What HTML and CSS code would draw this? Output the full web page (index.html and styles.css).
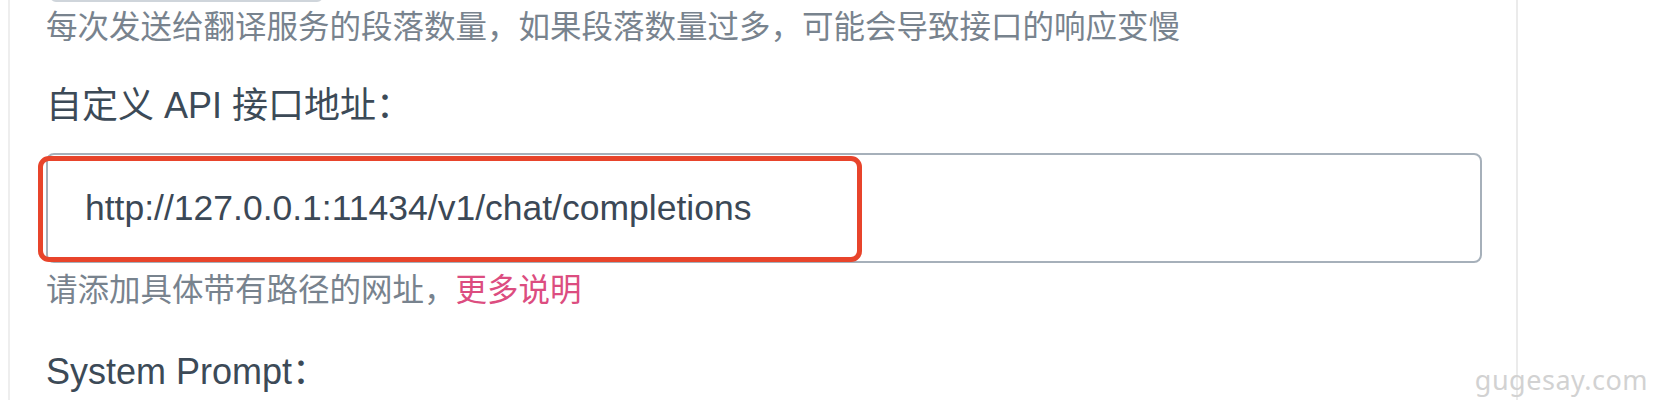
FILE: index.html
```html
<!DOCTYPE html>
<html lang="zh-CN">
<head>
<meta charset="utf-8">
<title>设置</title>
<link rel="stylesheet" href="styles.css">
</head>
<body>
<div class="page">
  <div class="panel">
    <div class="prev-input"></div>
    <p class="hint hint-first">每次发送给翻译服务的段落数量，如果段落数量过多，可能会导致接口的响应变慢</p>
    <label class="label label-api">自定义 API 接口地址：</label>
    <div class="field">
      <input class="text-input" type="text" value="http://127.0.0.1:11434/v1/chat/completions">
      <div class="highlight"></div>
    </div>
    <p class="hint hint-second">请添加具体带有路径的网址，<a class="link" href="#">更多说明</a></p>
    <label class="label label-prompt">System Prompt：</label>
  </div>
  <div class="watermark">gugesay.com</div>
</div>
</body>
</html>
```

FILE: styles.css
```css
html, body {
  margin: 0;
  padding: 0;
  background: #ffffff;
  height: 400px;
  overflow: hidden;
}

.page {
  position: relative;
  height: 400px;
  font-family: "Liberation Sans", "Noto Sans CJK SC", sans-serif;
}

.panel {
  margin-left: 8px;
  width: 1510px;
  height: 400px;
  box-sizing: border-box;
  border-left: 2px solid #eeeeee;
  border-right: 2px solid #ebebeb;
  padding-left: 36px;
  display: flex;
  flex-direction: column;
  align-items: flex-start;
}

.prev-input {
  width: 273px;
  height: 60px;
  margin-top: -58px;
  margin-left: 4px;
  box-sizing: border-box;
  border: 2px solid #cfd5db;
  border-radius: 6px;
}

.hint {
  margin: 0;
  font-size: 31.5px;
  line-height: 44px;
  color: #78838e;
}

.hint-first {
  margin-top: 3px;
}

.label {
  display: block;
  font-size: 36px;
  line-height: 44px;
  color: #3c4a57;
}

.label-api {
  margin-top: 35px;
}

.field {
  position: relative;
  margin-top: 25px;
  width: 1436px;
}

.text-input {
  display: block;
  width: 100%;
  height: 110px;
  box-sizing: border-box;
  border: 2px solid #a6b0ba;
  border-radius: 8px;
  padding: 0 0 0 37px;
  font-family: "Liberation Sans", "Noto Sans CJK SC", sans-serif;
  font-size: 35.5px;
  color: #3b4856;
  background: #ffffff;
  outline: none;
}

.highlight {
  position: absolute;
  left: -8px;
  top: 3px;
  width: 824px;
  height: 106px;
  box-sizing: border-box;
  border: 5px solid #e8442b;
  border-radius: 11px;
  pointer-events: none;
}

.hint-second {
  margin-top: 5px;
}

.link {
  color: #dc4d80;
  text-decoration: none;
}

.label-prompt {
  margin-top: 38px;
}

.watermark {
  position: absolute;
  right: 20px;
  bottom: 2px;
  font-family: "Noto Sans", "Open Sans", sans-serif;
  font-size: 27px;
  line-height: 36px;
  color: #d2d2d2;
  letter-spacing: 0.5px;
}
```
